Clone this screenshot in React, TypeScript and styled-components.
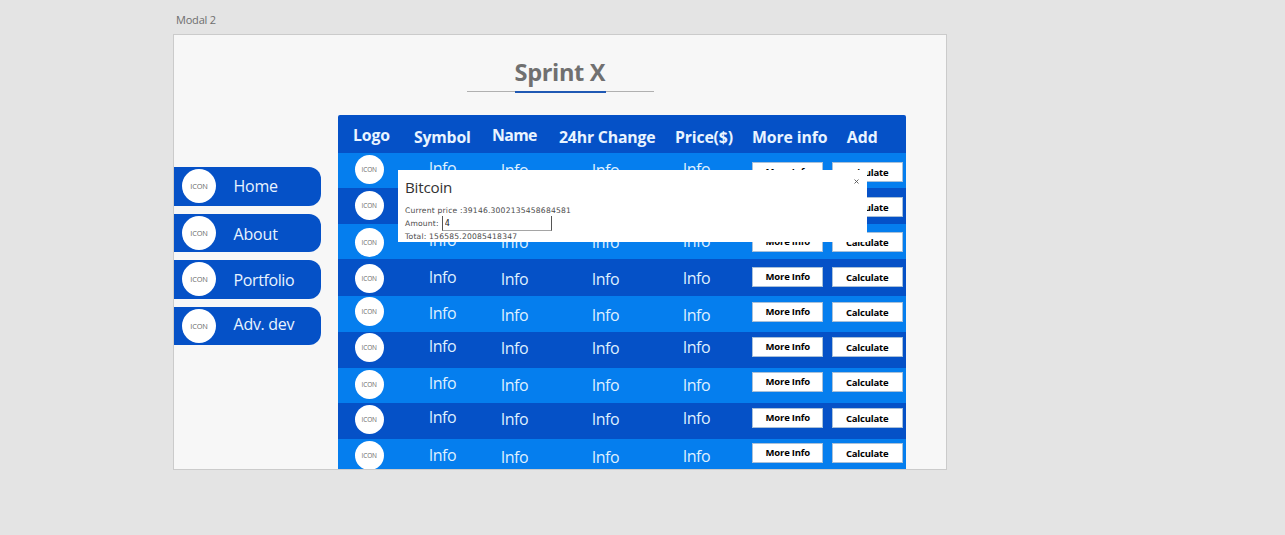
import React from 'react';
import styled, { createGlobalStyle } from 'styled-components';

const DARK = '#0551c7';
const LIGHT = '#057eee';

const GlobalStyle = createGlobalStyle`
  * { box-sizing: border-box; }
  body {
    margin: 0;
    background: #e4e4e4;
    font-family: "Open Sans", "Noto Sans", sans-serif;
    overflow: hidden;
  }
`;

const Canvas = styled.main`
  height: 535px;
  padding: 12px 0 0 173px;
  overflow: hidden;
`;

const ArtboardLabel = styled.div`
  height: 22px;
  padding-left: 3px;
  font-size: 11px;
  line-height: 16px;
  letter-spacing: -0.2px;
  color: #6e6e6e;
`;

const Artboard = styled.section`
  position: relative;
  width: 774px;
  height: 436px;
  border: 1px solid #cbcbcb;
  background: #f7f7f7;
  overflow: hidden;
`;

const Header = styled.header`
  display: flex;
  justify-content: center;
  width: 187px;
  height: 80.4px;
  margin-left: 292.5px;
  padding-top: 20px;
`;

const Title = styled.h1`
  display: flex;
  justify-content: center;
  width: 187px;
  height: 37px;
  margin: 0;
  border-bottom: 1px solid #b0b0b0;
`;

const TitleText = styled.span`
  width: 91px;
  height: 38px;
  border-bottom: 2px solid #2059b4;
  font-size: 23.6px;
  font-weight: 700;
  line-height: 35px;
  letter-spacing: -0.35px;
  white-space: nowrap;
  color: #707070;
`;

const Body = styled.div`
  display: flex;
  align-items: flex-start;
`;

const Nav = styled.nav`
  display: flex;
  flex-direction: column;
  gap: 8px;
  width: 164.4px;
  padding-top: 51.6px;
`;

const NavItem = styled.a`
  display: flex;
  align-items: flex-start;
  width: 147.4px;
  height: 38.6px;
  padding-left: 8px;
  border-radius: 0 12px 12px 0;
  background: ${DARK};
  color: #e9f4ff;
`;

const Icon = styled.span<{ $size: number; $top: number; $font: number }>`
  flex: none;
  width: ${p => p.$size}px;
  height: ${p => p.$size}px;
  margin-top: ${p => p.$top}px;
  border-radius: 50%;
  background: #fff;
  color: #6a6a6a;
  font-size: ${p => p.$font}px;
  line-height: ${p => p.$size}px;
  letter-spacing: -0.1px;
  text-align: center;
`;

const NavText = styled.span<{ $top: number; $track: number }>`
  margin: ${p => p.$top}px 0 0 17.6px;
  font-size: 16px;
  line-height: 20px;
  letter-spacing: ${p => p.$track}px;
  white-space: nowrap;
`;

const Table = styled.div`
  width: 567.3px;
  border-radius: 2px 2px 0 0;
  overflow: hidden;
`;

const Row = styled.div<{ $height: number; $light?: boolean }>`
  display: grid;
  grid-template-columns: 74px 72px 91px 91px 69.6px 79.4px 72px;
  align-items: start;
  height: ${p => p.$height}px;
  padding-left: 16.3px;
  background: ${p => (p.$light ? LIGHT : DARK)};
`;

const HeadRow = styled.div`
  display: grid;
  grid-template-columns: 61px 78px 67px 116px 77px 94.7px 50px;
  height: 37.6px;
  padding-left: 14.6px;
  background: ${DARK};
`;

const HeadCell = styled.span<{ $top: number; $track: number }>`
  padding-top: ${p => p.$top}px;
  font-size: 15.8px;
  font-weight: 700;
  line-height: 20px;
  letter-spacing: ${p => p.$track}px;
  white-space: nowrap;
  color: #e9f4ff;
`;

const Cell = styled.span<{ $top: number }>`
  margin-top: ${p => p.$top}px;
  font-size: 16px;
  line-height: 20px;
  letter-spacing: -0.45px;
  color: #dff0ff;
`;

const Button = styled.button<{ $top: number; $drop?: number }>`
  width: 71px;
  height: 20px;
  margin: ${p => p.$top}px 0 0;
  padding: ${p => p.$drop ?? 0}px 0 0;
  border: 1px solid #a9c0d8;
  background: #fff;
  color: #000;
  font: 700 9.5px/16px "Open Sans", "Noto Sans", sans-serif;
  letter-spacing: -0.2px;
  text-align: center;
  white-space: nowrap;
`;

const Modal = styled.div`
  position: absolute;
  left: 223.6px;
  top: 135px;
  display: flex;
  justify-content: space-between;
  width: 469.4px;
  height: 72px;
  padding: 7px 8.4px 0 7.4px;
  background: #fff;
  color: #4a4a4a;
  overflow: hidden;
`;

const ModalTitle = styled.h2`
  margin: 0 0 7px;
  font-size: 15.2px;
  font-weight: 400;
  line-height: 20px;
  letter-spacing: -0.2px;
  color: #333;
`;

const ModalLine = styled.div`
  display: flex;
  align-items: center;
  height: 13px;
  font: 7.6px/13px "DejaVu Sans", sans-serif;
  letter-spacing: 0.2px;
  white-space: nowrap;
`;

const AmountInput = styled.input`
  width: 110px;
  height: 15px;
  margin: 0 0 0 3px;
  padding: 0 2px;
  border: solid #555;
  border-width: 0 1px 1px;
  border-bottom-color: #a5a5a5;
  border-radius: 0;
  outline: none;
  background: #fff;
  color: #222;
  font: 8px "DejaVu Sans", sans-serif;
`;

const Close = styled.svg`
  width: 5px;
  height: 5px;
  margin-top: 1.5px;
`;

const navItems = [
  { label: 'Home', icon: 2, top: 9, track: -0.3 },
  { label: 'About', icon: 2, top: 10, track: -0.2 },
  { label: 'Portfolio', icon: 2, top: 10, track: -0.4 },
  { label: 'Adv. dev', icon: 2.5, top: 7, track: -0.3 },
];

const columns = [
  { label: 'Logo', top: 9.5, track: -0.15 },
  { label: 'Symbol', top: 11.5, track: -0.2 },
  { label: 'Name', top: 9.5, track: -0.6 },
  { label: '24hr Change', top: 11.5, track: -0.18 },
  { label: 'Price($)', top: 11.5, track: -0.15 },
  { label: 'More info', top: 11.5, track: -0.1 },
  { label: 'Add', top: 11.5, track: 0.15 },
];

/* height of each row, then the top offset of its icon, texts and buttons */
const rows = [
  { h: 35, icon: 2, symbol: 5, name: 7, price: 6, button: 9 },
  { h: 36, icon: 3.5, symbol: 5, name: 7, price: 6, button: 9 },
  { h: 35, icon: 4, symbol: 6, name: 8, price: 7, button: 8 },
  { h: 37, icon: 5.5, symbol: 8, name: 10, price: 9, button: 8 },
  { h: 36, icon: 1, symbol: 7, name: 9, price: 9, button: 6 },
  { h: 36, icon: 1.5, symbol: 4, name: 6, price: 5, button: 5 },
  { h: 35, icon: 2, symbol: 5, name: 7, price: 7, button: 4 },
  { h: 36, icon: 2, symbol: 4, name: 6, price: 5, button: 5 },
  { h: 36, icon: 2.5, symbol: 6, name: 8, price: 7, button: 4 },
];

export default function App() {
  return (
    <Canvas>
      <GlobalStyle />
      <ArtboardLabel>Modal 2</ArtboardLabel>
      <Artboard>
        <Header>
          <Title>
            <TitleText>Sprint X</TitleText>
          </Title>
        </Header>
        <Body>
          <Nav>
            {navItems.map(item => (
              <NavItem key={item.label}>
                <Icon $size={34} $top={item.icon} $font={7.4}>ICON</Icon>
                <NavText $top={item.top} $track={item.track}>{item.label}</NavText>
              </NavItem>
            ))}
          </Nav>
          <Table>
            <HeadRow>
              {columns.map(c => (
                <HeadCell key={c.label} $top={c.top} $track={c.track}>{c.label}</HeadCell>
              ))}
            </HeadRow>
            {rows.map((r, i) => (
              <Row key={i} $height={r.h} $light={i % 2 === 0}>
                <Icon $size={29} $top={r.icon} $font={6.5}>ICON</Icon>
                <Cell $top={r.symbol}>Info</Cell>
                <Cell $top={r.name}>Info</Cell>
                <Cell $top={r.name}>Info</Cell>
                <Cell $top={r.price}>Info</Cell>
                <Button $top={r.button}>More Info</Button>
                <Button $top={r.button} $drop={2}>Calculate</Button>
              </Row>
            ))}
          </Table>
        </Body>
        <Modal>
          <div>
            <ModalTitle>Bitcoin</ModalTitle>
            <ModalLine>Current price :39146.3002135458684581</ModalLine>
            <ModalLine>
              Amount:
              <AmountInput defaultValue="4" />
            </ModalLine>
            <ModalLine>Total: 156585.20085418347</ModalLine>
          </div>
          <Close viewBox="0 0 5 5">
            <path d="M0.5 0.5L4.5 4.5M4.5 0.5L0.5 4.5" stroke="#555" strokeWidth="0.9" />
          </Close>
        </Modal>
      </Artboard>
    </Canvas>
  );
}
